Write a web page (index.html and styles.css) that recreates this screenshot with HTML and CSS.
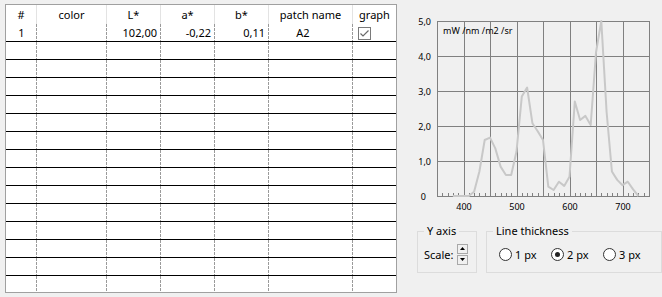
FILE: index.html
```html
<!DOCTYPE html>
<html lang="en">
<head>
  <meta charset="UTF-8" />
  <title>Patch spectra</title>
  <link rel="stylesheet" href="styles.css">
</head>
<body>
  <div class="window">
    <div class="patch-table">
      <div class="row head">
        <div class="cell">#</div>
        <div class="cell">color</div>
        <div class="cell">L*</div>
        <div class="cell">a*</div>
        <div class="cell">b*</div>
        <div class="cell">patch name</div>
        <div class="cell">graph</div>
      </div>
      <div class="row">
        <div class="cell center">1</div>
        <div class="cell"></div>
        <div class="cell num">102,00</div>
        <div class="cell num">-0,22</div>
        <div class="cell num">0,11</div>
        <div class="cell name">A2</div>
        <div class="cell check">
          <svg width="13" height="13" viewBox="0 0 13 13">
            <rect x="0.5" y="0.5" width="12" height="12" fill="#fff" stroke="#7a7a7a" />
            <path d="M2.5 6.5 L5 9 L10.5 3.5" fill="none" stroke="#6a6a6a" stroke-width="1.2" />
          </svg>
        </div>
      </div>
      <div class="row"><div class="cell"></div><div class="cell"></div><div class="cell"></div><div class="cell"></div><div class="cell"></div><div class="cell"></div><div class="cell"></div></div>
      <div class="row"><div class="cell"></div><div class="cell"></div><div class="cell"></div><div class="cell"></div><div class="cell"></div><div class="cell"></div><div class="cell"></div></div>
      <div class="row"><div class="cell"></div><div class="cell"></div><div class="cell"></div><div class="cell"></div><div class="cell"></div><div class="cell"></div><div class="cell"></div></div>
      <div class="row"><div class="cell"></div><div class="cell"></div><div class="cell"></div><div class="cell"></div><div class="cell"></div><div class="cell"></div><div class="cell"></div></div>
      <div class="row"><div class="cell"></div><div class="cell"></div><div class="cell"></div><div class="cell"></div><div class="cell"></div><div class="cell"></div><div class="cell"></div></div>
      <div class="row"><div class="cell"></div><div class="cell"></div><div class="cell"></div><div class="cell"></div><div class="cell"></div><div class="cell"></div><div class="cell"></div></div>
      <div class="row"><div class="cell"></div><div class="cell"></div><div class="cell"></div><div class="cell"></div><div class="cell"></div><div class="cell"></div><div class="cell"></div></div>
      <div class="row"><div class="cell"></div><div class="cell"></div><div class="cell"></div><div class="cell"></div><div class="cell"></div><div class="cell"></div><div class="cell"></div></div>
      <div class="row"><div class="cell"></div><div class="cell"></div><div class="cell"></div><div class="cell"></div><div class="cell"></div><div class="cell"></div><div class="cell"></div></div>
      <div class="row"><div class="cell"></div><div class="cell"></div><div class="cell"></div><div class="cell"></div><div class="cell"></div><div class="cell"></div><div class="cell"></div></div>
      <div class="row"><div class="cell"></div><div class="cell"></div><div class="cell"></div><div class="cell"></div><div class="cell"></div><div class="cell"></div><div class="cell"></div></div>
      <div class="row"><div class="cell"></div><div class="cell"></div><div class="cell"></div><div class="cell"></div><div class="cell"></div><div class="cell"></div><div class="cell"></div></div>
      <div class="row"><div class="cell"></div><div class="cell"></div><div class="cell"></div><div class="cell"></div><div class="cell"></div><div class="cell"></div><div class="cell"></div></div>
      <div class="row"><div class="cell"></div><div class="cell"></div><div class="cell"></div><div class="cell"></div><div class="cell"></div><div class="cell"></div><div class="cell"></div></div>
    </div>

    <div class="side">
      <!-- spectrum chart: x = 37 + (nm-350)*0.53, y = 196 - value*35 -->
      <svg class="chart" width="262" height="218" viewBox="0 0 262 218">
        <g class="grid" stroke="#808080" stroke-width="1" shape-rendering="crispEdges">
          <path d="M37.5 21 V196.5 M64.5 21 V196 M90.5 21 V196 M117.5 21 V196 M143.5 21 V196 M170.5 21 V196 M196.5 21 V196 M223.5 21 V196 M249.5 21 V196.5" />
          <path d="M37 21.5 H250 M37 56.5 H250 M37 91.5 H250 M37 126.5 H250 M37 161.5 H250 M37 196.5 H250" />
          <path d="M42.5 193 V196 M48.5 193 V196 M53.5 193 V196 M58.5 193 V196 M69.5 193 V196 M74.5 193 V196 M79.5 193 V196 M85.5 193 V196 M95.5 193 V196 M101.5 193 V196 M106.5 193 V196 M111.5 193 V196 M122.5 193 V196 M127.5 193 V196 M132.5 193 V196 M138.5 193 V196 M148.5 193 V196 M154.5 193 V196 M159.5 193 V196 M164.5 193 V196 M175.5 193 V196 M180.5 193 V196 M185.5 193 V196 M191.5 193 V196 M201.5 193 V196 M207.5 193 V196 M212.5 193 V196 M217.5 193 V196 M228.5 193 V196 M233.5 193 V196 M238.5 193 V196 M244.5 193 V196" />
        </g>
        <text class="unit" x="43" y="34">mW /nm /m2 /sr</text>
        <g class="ylab" text-anchor="end">
          <text x="31" y="24.5">5,0</text>
          <text x="31" y="59.5">4,0</text>
          <text x="31" y="94.5">3,0</text>
          <text x="31" y="129.5">2,0</text>
          <text x="31" y="164.5">1,0</text>
          <text x="26" y="199.5">0</text>
        </g>
        <g class="xlab" text-anchor="middle">
          <text x="64" y="210">400</text>
          <text x="117" y="210">500</text>
          <text x="170" y="210">600</text>
          <text x="223" y="210">700</text>
        </g>
        <polyline fill="none" stroke="#c8c8c8" stroke-width="2" stroke-linejoin="round"
          points="52.9,196 58.2,196 63.5,196 68.8,196 74.1,191.8 79.4,171.5 84.7,140 90,137.6 95.3,148.4 100.6,166.6 105.9,175 111.2,175 116.5,151.5 121.8,96.6 127.1,87.5 132.4,123.2 137.7,131.3 143,140 148.3,186.6 153.6,190 158.9,181.7 164.2,185.9 169.5,176.8 174.8,101.5 180.1,120 185.4,115.9 190.7,125 196,52.5 201.3,21 206.6,112 211.9,171.5 217.2,179.9 222.5,185.2 227.8,181.7 233.1,189.4 238.4,196" />
      </svg>

      <div class="groups">
        <fieldset class="group yaxis">
          <legend>Y axis</legend>
          <div class="group-body">
            <span>Scale:</span>
            <span class="spin">
              <span class="spin-btn"><svg width="5" height="3" viewBox="0 0 5 3"><path d="M0 3 L2.5 0 L5 3 Z" fill="#000"/></svg></span>
              <span class="spin-btn"><svg width="5" height="3" viewBox="0 0 5 3"><path d="M0 0 L5 0 L2.5 3 Z" fill="#000"/></svg></span>
            </span>
          </div>
        </fieldset>
        <fieldset class="group thick">
          <legend>Line thickness</legend>
          <div class="group-body">
            <label class="opt"><span class="radio"></span>1 px</label>
            <label class="opt"><span class="radio on"></span>2 px</label>
            <label class="opt"><span class="radio"></span>3 px</label>
          </div>
        </fieldset>
      </div>
    </div>
  </div>
</body>
</html>
```

FILE: styles.css
```css
* { box-sizing: border-box; }
body {
  margin: 0;
  background: #f0f0f0;
  color: #000;
  font-family: "Noto Sans", sans-serif;
  font-size: 11px;
}
.window {
  display: flex;
  align-items: flex-start;
  width: 662px;
  height: 297px;
  overflow: hidden;
}

/* patch table */
.patch-table {
  margin: 4px 0 0 5px;
  width: 392px;
  height: 289px;
  border: 1px solid #a0a0a0;
  background: #fff;
  overflow: hidden;
}
.row {
  display: grid;
  grid-template-columns: 31px 70px 54px 54px 54px 84px 43px;
  height: 18px;
  border-bottom: 1px solid #000;
}
.row.head {
  height: 19px;
  border-bottom: none;
}
.cell {
  height: 17px;
  line-height: 17px;
  padding: 0 4px;
  white-space: nowrap;
  overflow: hidden;
  background-image: repeating-linear-gradient(#9a9a9a 0 3px, transparent 3px 4px);
  background-size: 1px 100%;
  background-position: right top;
  background-repeat: no-repeat;
}
.cell:last-child { background-image: none; }
.head .cell {
  height: 19px;
  line-height: 19px;
  text-align: center;
  background-image: none;
  border-right: 1px solid #e3e3e3;
}
.head .cell:last-child { border-right: none; }
.cell.center { text-align: center; }
.cell.num { text-align: right; }
.cell.name { text-align: center; padding-right: 20px; }
.cell.check { padding: 3px 0 0 5px; line-height: 0; }

/* right side */
.side {
  margin-left: 3px;
  width: 262px;
}
.chart {
  display: block;
}
.chart text {
  font-family: "Noto Sans", sans-serif;
  font-size: 9px;
  fill: #000;
}
.groups {
  display: flex;
  gap: 9px;
  margin-top: 5px;
  padding-left: 17px;
}
.group {
  margin: 0;
  padding: 0 6px 3px;
  border: 1px solid #dcdcdc;
}
.group legend {
  padding: 0 3px;
  line-height: 16px;
}
.group.yaxis { width: 61px; }
.group.thick { width: 168px; }
.group-body {
  display: flex;
  align-items: center;
  height: 30px;
}
.spin {
  display: flex;
  flex-direction: column;
  gap: 1px;
  margin-left: 4px;
}
.spin-btn {
  display: flex;
  align-items: center;
  justify-content: center;
  width: 11px;
  height: 10px;
  border: 1px solid #a8a8a8;
  background: #f0f0f0;
}
.thick .group-body { padding-left: 6px; }
.opt {
  display: flex;
  align-items: center;
  gap: 3px;
  width: 52px;
}
.radio {
  position: relative;
  width: 13px;
  height: 13px;
  border: 1px solid #333;
  border-radius: 50%;
  background: #fff;
}
.radio.on::after {
  content: "";
  position: absolute;
  left: 3px;
  top: 3px;
  width: 5px;
  height: 5px;
  border-radius: 50%;
  background: #222;
}
```
